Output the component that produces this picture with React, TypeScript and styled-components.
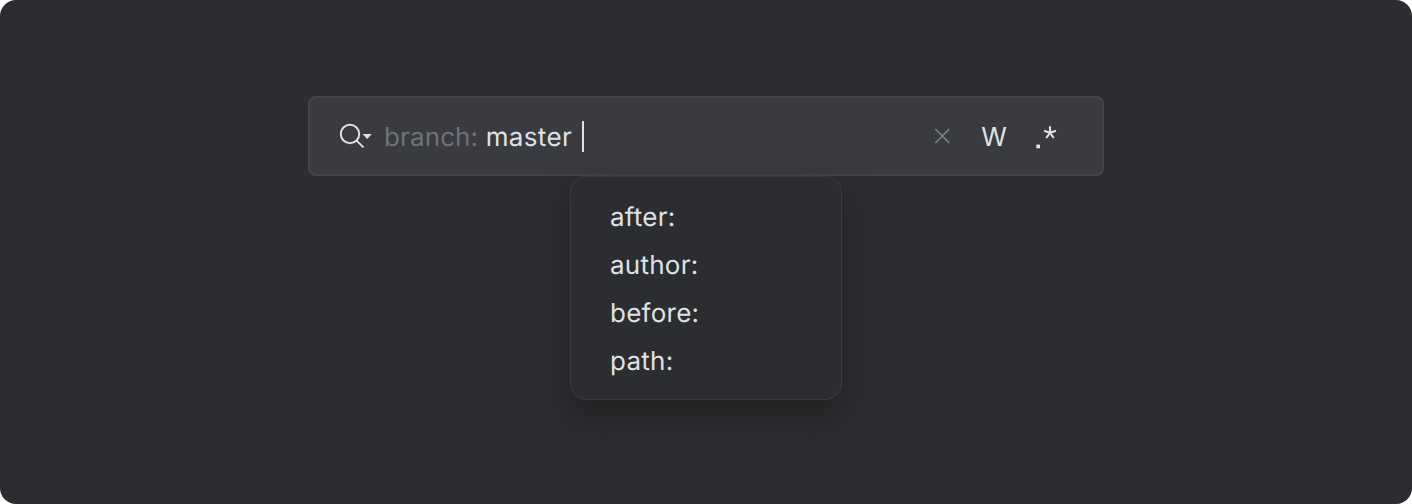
import React from "react";
import styled, { createGlobalStyle } from "styled-components";

const GlobalStyle = createGlobalStyle`
  * { box-sizing: border-box; }
  body { margin: 0; background: #ffffff; overflow: hidden; }
`;

const Stage = styled.main`
  display: flex;
  flex-direction: column;
  align-items: center;
  height: 504px;
  padding-top: 96px;
  border-radius: 16px;
  background: #2b2d30;
  color: #dfe1e5;
  font: 400 26px/32px Inter, sans-serif;
  font-variation-settings: "opsz" 14;
  text-rendering: geometricPrecision;
`;

const SearchField = styled.div`
  display: flex;
  align-items: center;
  width: 796px;
  height: 80px;
  padding: 0 42px 0 30px;
  border: 2px solid #43454a;
  border-radius: 8px;
  background: #393b40;
`;

const SearchIcon = styled.svg`
  flex: none;
  width: 34px;
  height: 32px;
  margin-right: 10px;
`;

const Query = styled.div`
  display: flex;
  flex: 1;
  align-items: center;
  padding-top: 3px;
  white-space: pre;
`;

const Keyword = styled.span`
  color: #6f7177;
  letter-spacing: 0.12px;
`;

const Value = styled.span`
  letter-spacing: 0.35px;
`;

const Caret = styled.span`
  width: 2px;
  height: 31px;
  margin: 0 0 3px 2px;
  background: #dfe1e5;
`;

const Actions = styled.div`
  display: flex;
  align-items: center;
  gap: 24px;
`;

const ActionIcon = styled.svg`
  width: 28px;
  height: 32px;
`;

const WordToggle = styled.span`
  width: 28px;
  padding-top: 3px;
  text-align: center;
`;

const Suggestions = styled.ul`
  width: 272px;
  height: 224px;
  margin: 0;
  padding: 17px 39px 13px;
  list-style: none;
  border: 1px solid #393b40;
  border-radius: 16px;
  background: #2b2d30;
  box-shadow: 0 16px 32px rgba(30, 30, 30, 0.7);
`;

const Suggestion = styled.li`
  height: 48px;
  line-height: 48px;
  letter-spacing: 0.25px;
`;

const keywords = ["after:", "author:", "before:", "path:"];

export default function App() {
  return (
    <>
      <GlobalStyle />
      <Stage>
        <SearchField>
          <SearchIcon viewBox="0 0 34 32" fill="none">
            <circle cx="10" cy="14" r="9.2" stroke="#dfe1e5" strokeWidth="2" />
            <path d="M16.6 20.6 23.4 27.4" stroke="#dfe1e5" strokeWidth="2" />
            <path d="M22.6 14h9.2l-4.6 5z" fill="#dfe1e5" />
          </SearchIcon>
          <Query>
            <Keyword>branch: </Keyword>
            <Value>master </Value>
            <Caret />
          </Query>
          <Actions>
            <ActionIcon viewBox="0 0 28 32" fill="none">
              <path d="m7.3 9 14 14M21.3 9l-14 14" stroke="#7d8087" strokeWidth="1.7" />
            </ActionIcon>
            <WordToggle>W</WordToggle>
            <ActionIcon viewBox="0 0 28 32" fill="none">
              <path d="M4.3 24.6H8v3.7H4.3z" fill="#dfe1e5" />
              <path
                d="M18 12.8V6.2M18 12.8l-6-2M18 12.8l6-2M18 12.8l-3.8 5.2M18 12.8l3.8 5.2"
                stroke="#dfe1e5"
                strokeWidth="2.1"
              />
            </ActionIcon>
          </Actions>
        </SearchField>
        <Suggestions>
          {keywords.map((keyword) => (
            <Suggestion key={keyword}>{keyword}</Suggestion>
          ))}
        </Suggestions>
      </Stage>
    </>
  );
}
